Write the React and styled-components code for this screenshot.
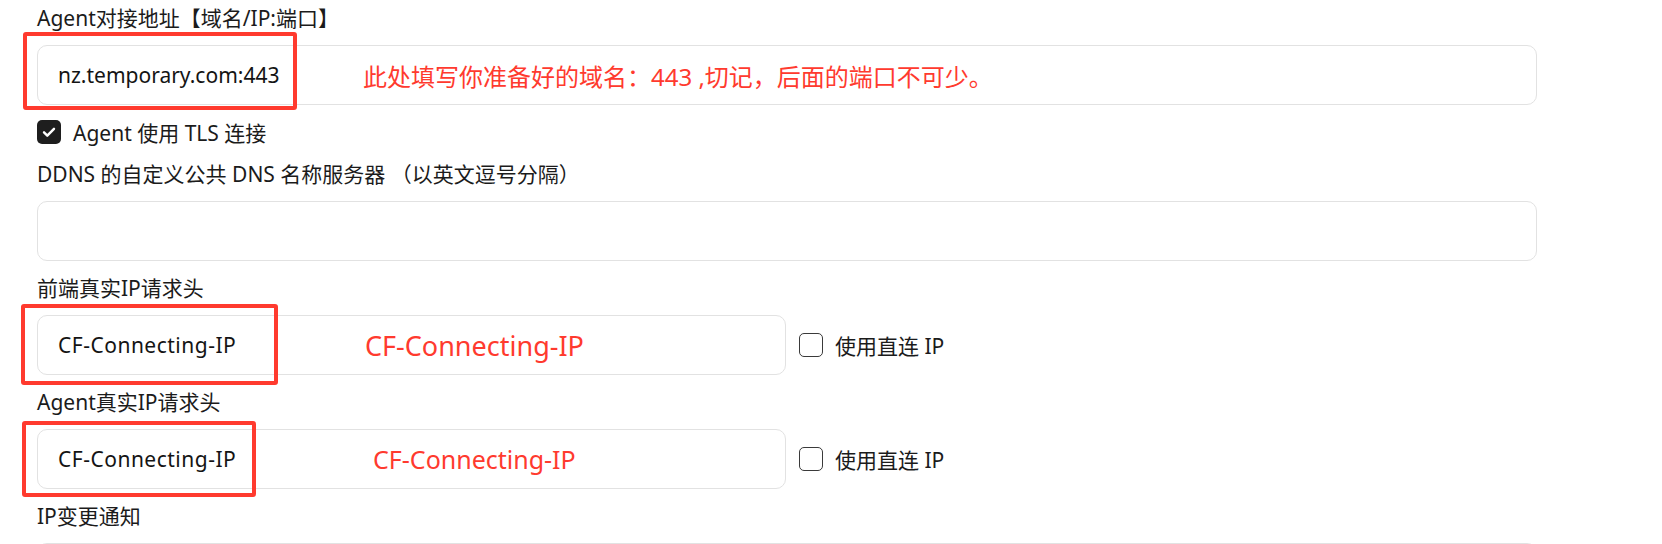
import React from "react";
import styled, { createGlobalStyle } from "styled-components";

const GlobalStyle = createGlobalStyle`
  html, body {
    margin: 0;
    padding: 0;
    background: #ffffff;
    overflow: hidden;
  }
  body {
    font-family: "Noto Sans", "Noto Sans CJK SC", sans-serif;
    color: #1b1b1b;
  }
`;

function CheckMark() {
  return (
    <svg width="16" height="16" viewBox="0 0 16 16" fill="none">
      <path
        d="M3 8.3l3.3 3.4L13 4.8"
        stroke="#ffffff"
        strokeWidth="2.4"
        strokeLinecap="round"
        strokeLinejoin="round"
      />
    </svg>
  );
}

function Checkbox({ checked, label }) {
  return (
    <CheckLabel>
      <Box $checked={checked}>{checked && <CheckMark />}</Box>
      <span>{label}</span>
    </CheckLabel>
  );
}

function App() {
  return (
    <>
      <GlobalStyle />
      <Page>
        <Field>
          <Label>Agent对接地址【域名/IP:端口】</Label>
          <InputWrap>
            <Input defaultValue="nz.temporary.com:443" />
            <Note $left={326} $size={24}>
              此处填写你准备好的域名：443 ,切记，后面的端口不可少。
            </Note>
            <Highlight $left={-14} $top={-13} $w={274} $h={78} />
          </InputWrap>
        </Field>

        <CheckRow>
          <Checkbox checked label="Agent 使用 TLS 连接" />
        </CheckRow>

        <Field>
          <Label>DDNS 的自定义公共 DNS 名称服务器 （以英文逗号分隔）</Label>
          <InputWrap>
            <Input defaultValue="" />
          </InputWrap>
        </Field>

        <Field>
          <Label>前端真实IP请求头</Label>
          <SplitRow>
            <InputWrap $half>
              <Input $spaced defaultValue="CF-Connecting-IP" />
              <Note $left={328} $size={27}>CF-Connecting-IP</Note>
              <Highlight $left={-16} $top={-11} $w={257} $h={81} />
            </InputWrap>
            <Checkbox label="使用直连 IP" />
          </SplitRow>
        </Field>

        <Field>
          <Label>Agent真实IP请求头</Label>
          <SplitRow>
            <InputWrap $half>
              <Input $spaced defaultValue="CF-Connecting-IP" />
              <Note $left={336} $size={25}>CF-Connecting-IP</Note>
              <Highlight $left={-15} $top={-8} $w={234} $h={76} />
            </InputWrap>
            <Checkbox label="使用直连 IP" />
          </SplitRow>
        </Field>

        <Field>
          <Label>IP变更通知</Label>
          <InputWrap>
            <Input defaultValue="" />
          </InputWrap>
        </Field>
      </Page>
    </>
  );
}

const Page = styled.div`
  padding: 3px 0 0 37px;
  width: 1500px;
`;

const Field = styled.div`
  margin-bottom: 12px;
`;

const Label = styled.div`
  font-size: 21px;
  line-height: 30px;
  height: 30px;
  margin-bottom: 12px;
  white-space: nowrap;
`;

const InputWrap = styled.div`
  position: relative;
  width: ${(p) => (p.$half ? "749px" : "1500px")};
  flex-shrink: 0;
`;

const Input = styled.input`
  display: block;
  box-sizing: border-box;
  width: 100%;
  height: 60px;
  padding: 0 20px;
  border: 1px solid #e2e2e2;
  border-radius: 10px;
  background: #fff;
  font-family: inherit;
  font-size: 21px;
  letter-spacing: ${(p) => (p.$spaced ? "0.5px" : "0")};
  color: #141414;
  outline: none;
`;

const Note = styled.span`
  position: absolute;
  left: ${(p) => p.$left}px;
  top: 50%;
  transform: translateY(-50%);
  font-size: ${(p) => p.$size}px;
  color: #ff3a2e;
  white-space: nowrap;
  pointer-events: none;
`;

const Highlight = styled.div`
  position: absolute;
  left: ${(p) => p.$left}px;
  top: ${(p) => p.$top}px;
  width: ${(p) => p.$w}px;
  height: ${(p) => p.$h}px;
  box-sizing: border-box;
  border: 4px solid #ff3a2e;
  border-radius: 3px;
  pointer-events: none;
`;

const CheckRow = styled.div`
  height: 30px;
  display: flex;
  align-items: center;
  margin: 12px 0;
`;

const SplitRow = styled.div`
  display: flex;
  align-items: center;
  gap: 13px;
`;

const CheckLabel = styled.label`
  display: flex;
  align-items: center;
  gap: 12px;
  font-size: 21px;
  white-space: nowrap;
`;

const Box = styled.span`
  box-sizing: border-box;
  width: 24px;
  height: 24px;
  border-radius: 5px;
  display: flex;
  align-items: center;
  justify-content: center;
  border: ${(p) => (p.$checked ? "none" : "1.5px solid #3a3a3a")};
  background: ${(p) => (p.$checked ? "#1e1e1e" : "#fff")};
`;

export default App;
